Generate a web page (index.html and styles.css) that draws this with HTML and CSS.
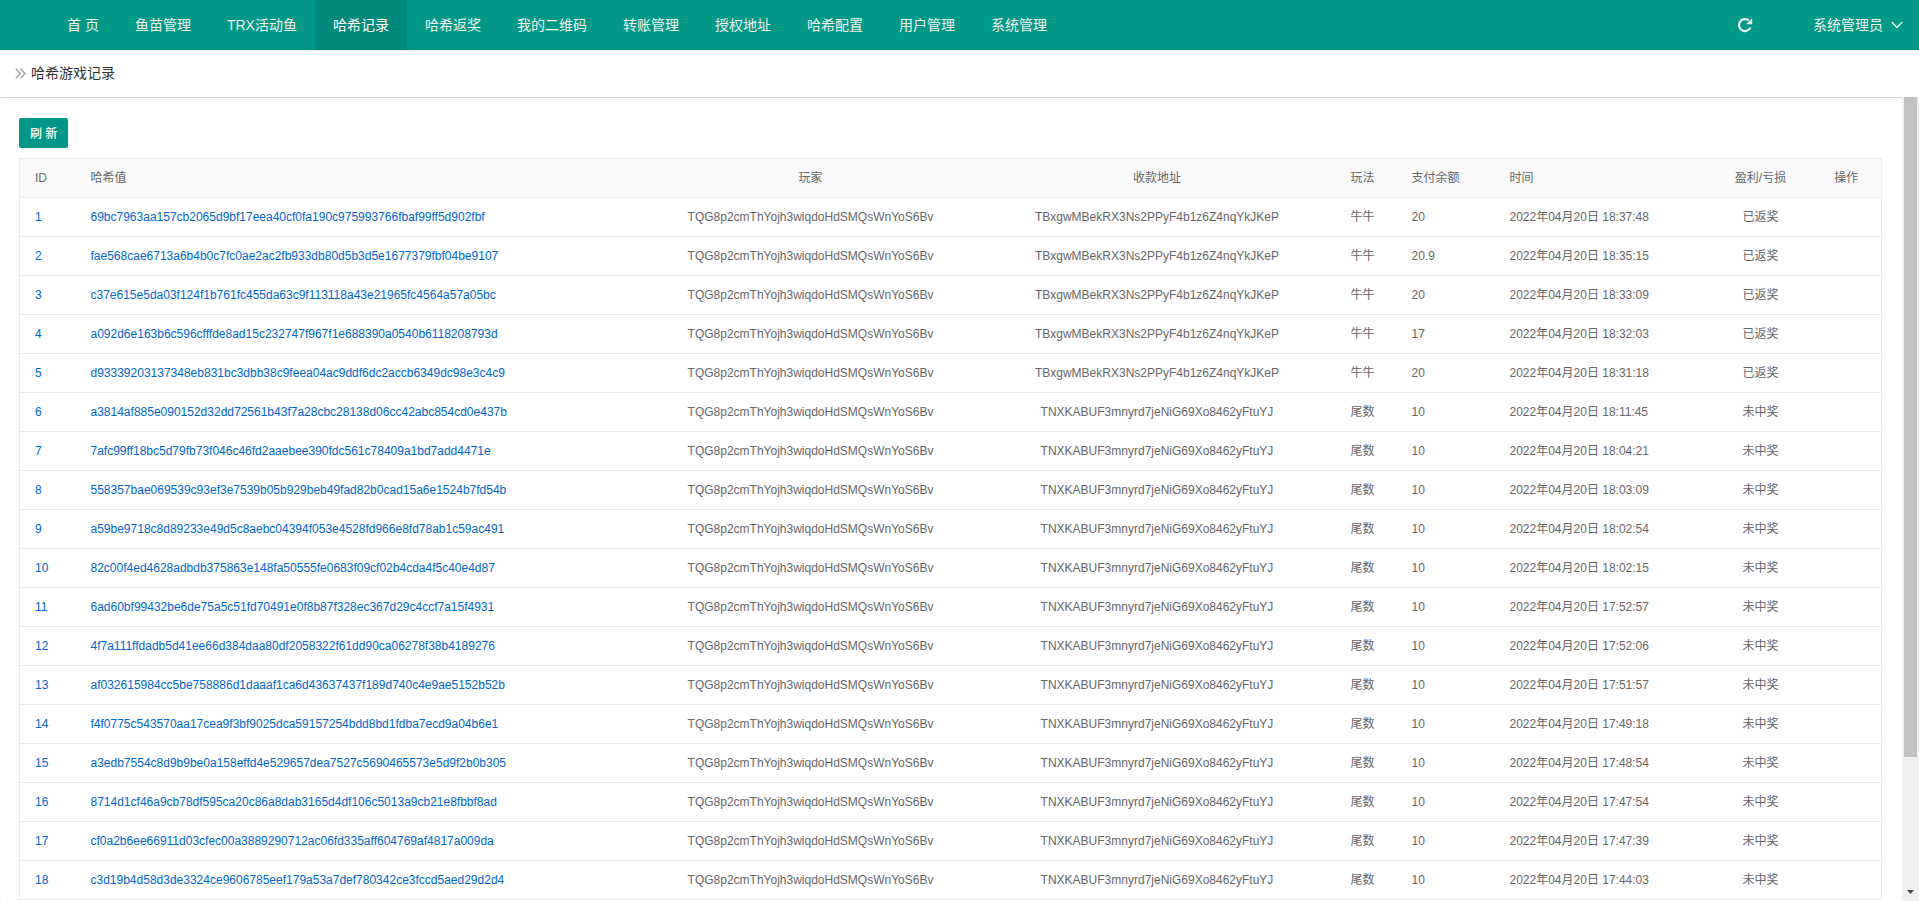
FILE: index.html
```html
<!DOCTYPE html>
<html lang="zh-CN">
<head>
<meta charset="utf-8">
<title>哈希游戏记录</title>
<link rel="stylesheet" href="styles.css">
</head>
<body>
<header class="topbar">
  <nav class="nav">
    <a href="#">首 页</a>
    <a href="#">鱼苗管理</a>
    <a href="#">TRX活动鱼</a>
    <a href="#" class="active">哈希记录</a>
    <a href="#">哈希返奖</a>
    <a href="#">我的二维码</a>
    <a href="#">转账管理</a>
    <a href="#">授权地址</a>
    <a href="#">哈希配置</a>
    <a href="#">用户管理</a>
    <a href="#">系统管理</a>
  </nav>
  <div class="tools">
    <button type="button" class="reload" aria-label="刷新页面">
      <svg width="16" height="16" viewBox="0 0 16 16"><path d="M13.400 10.600A6 6 0 1 1 11.600 3.300" fill="none" stroke="currentColor" stroke-width="2.200"/><path d="M15.200 1v6.200H9z" fill="currentColor"/></svg>
    </button>
    <button type="button" class="user">系统管理员
      <svg width="12" height="8" viewBox="0 0 12 8"><path d="M.8 1 6 6.500 11.200 1" fill="none" stroke="currentColor" stroke-width="1.400"/></svg>
    </button>
  </div>
</header>
<div class="crumb">
  <svg width="11" height="11" viewBox="0 0 11 11"><path d="M.8.6 5.200 5.500.8 10.400M5.600.6 10 5.500 5.600 10.400" fill="none" stroke="currentColor" stroke-width="1.300"/></svg>
  <h1>哈希游戏记录</h1>
</div>
<div class="body">
  <main class="card">
    <button type="button" class="btn">刷 新</button>
    <table class="records">
      <colgroup>
        <col class="w-id"><col><col class="w-player"><col class="w-address"><col class="w-play"><col class="w-pay"><col class="w-time"><col class="w-result"><col class="w-action">
      </colgroup>
      <thead>
        <tr><th>ID</th><th>哈希值</th><th class="mid">玩家</th><th class="mid">收款地址</th><th>玩法</th><th>支付余额</th><th>时间</th><th class="mid">盈利/亏损</th><th class="mid">操作</th></tr>
      </thead>
      <tbody>
        <tr><td><a href="#">1</a></td><td><a href="#">69bc7963aa157cb2065d9bf17eea40cf0fa190c975993766fbaf99ff5d902fbf</a></td><td class="mid">TQG8p2cmThYojh3wiqdoHdSMQsWnYoS6Bv</td><td class="mid">TBxgwMBekRX3Ns2PPyF4b1z6Z4nqYkJKeP</td><td>牛牛</td><td>20</td><td>2022年04月20日 18:37:48</td><td class="mid">已返奖</td><td></td></tr>
        <tr><td><a href="#">2</a></td><td><a href="#">fae568cae6713a6b4b0c7fc0ae2ac2fb933db80d5b3d5e1677379fbf04be9107</a></td><td class="mid">TQG8p2cmThYojh3wiqdoHdSMQsWnYoS6Bv</td><td class="mid">TBxgwMBekRX3Ns2PPyF4b1z6Z4nqYkJKeP</td><td>牛牛</td><td>20.9</td><td>2022年04月20日 18:35:15</td><td class="mid">已返奖</td><td></td></tr>
        <tr><td><a href="#">3</a></td><td><a href="#">c37e615e5da03f124f1b761fc455da63c9f113118a43e21965fc4564a57a05bc</a></td><td class="mid">TQG8p2cmThYojh3wiqdoHdSMQsWnYoS6Bv</td><td class="mid">TBxgwMBekRX3Ns2PPyF4b1z6Z4nqYkJKeP</td><td>牛牛</td><td>20</td><td>2022年04月20日 18:33:09</td><td class="mid">已返奖</td><td></td></tr>
        <tr><td><a href="#">4</a></td><td><a href="#">a092d6e163b6c596cfffde8ad15c232747f967f1e688390a0540b6118208793d</a></td><td class="mid">TQG8p2cmThYojh3wiqdoHdSMQsWnYoS6Bv</td><td class="mid">TBxgwMBekRX3Ns2PPyF4b1z6Z4nqYkJKeP</td><td>牛牛</td><td>17</td><td>2022年04月20日 18:32:03</td><td class="mid">已返奖</td><td></td></tr>
        <tr><td><a href="#">5</a></td><td><a href="#">d93339203137348eb831bc3dbb38c9feea04ac9ddf6dc2accb6349dc98e3c4c9</a></td><td class="mid">TQG8p2cmThYojh3wiqdoHdSMQsWnYoS6Bv</td><td class="mid">TBxgwMBekRX3Ns2PPyF4b1z6Z4nqYkJKeP</td><td>牛牛</td><td>20</td><td>2022年04月20日 18:31:18</td><td class="mid">已返奖</td><td></td></tr>
        <tr><td><a href="#">6</a></td><td><a href="#">a3814af885e090152d32dd72561b43f7a28cbc28138d06cc42abc854cd0e437b</a></td><td class="mid">TQG8p2cmThYojh3wiqdoHdSMQsWnYoS6Bv</td><td class="mid">TNXKABUF3mnyrd7jeNiG69Xo8462yFtuYJ</td><td>尾数</td><td>10</td><td>2022年04月20日 18:11:45</td><td class="mid">未中奖</td><td></td></tr>
        <tr><td><a href="#">7</a></td><td><a href="#">7afc99ff18bc5d79fb73f046c46fd2aaebee390fdc561c78409a1bd7add4471e</a></td><td class="mid">TQG8p2cmThYojh3wiqdoHdSMQsWnYoS6Bv</td><td class="mid">TNXKABUF3mnyrd7jeNiG69Xo8462yFtuYJ</td><td>尾数</td><td>10</td><td>2022年04月20日 18:04:21</td><td class="mid">未中奖</td><td></td></tr>
        <tr><td><a href="#">8</a></td><td><a href="#">558357bae069539c93ef3e7539b05b929beb49fad82b0cad15a6e1524b7fd54b</a></td><td class="mid">TQG8p2cmThYojh3wiqdoHdSMQsWnYoS6Bv</td><td class="mid">TNXKABUF3mnyrd7jeNiG69Xo8462yFtuYJ</td><td>尾数</td><td>10</td><td>2022年04月20日 18:03:09</td><td class="mid">未中奖</td><td></td></tr>
        <tr><td><a href="#">9</a></td><td><a href="#">a59be9718c8d89233e49d5c8aebc04394f053e4528fd966e8fd78ab1c59ac491</a></td><td class="mid">TQG8p2cmThYojh3wiqdoHdSMQsWnYoS6Bv</td><td class="mid">TNXKABUF3mnyrd7jeNiG69Xo8462yFtuYJ</td><td>尾数</td><td>10</td><td>2022年04月20日 18:02:54</td><td class="mid">未中奖</td><td></td></tr>
        <tr><td><a href="#">10</a></td><td><a href="#">82c00f4ed4628adbdb375863e148fa50555fe0683f09cf02b4cda4f5c40e4d87</a></td><td class="mid">TQG8p2cmThYojh3wiqdoHdSMQsWnYoS6Bv</td><td class="mid">TNXKABUF3mnyrd7jeNiG69Xo8462yFtuYJ</td><td>尾数</td><td>10</td><td>2022年04月20日 18:02:15</td><td class="mid">未中奖</td><td></td></tr>
        <tr><td><a href="#">11</a></td><td><a href="#">6ad60bf99432be6de75a5c51fd70491e0f8b87f328ec367d29c4ccf7a15f4931</a></td><td class="mid">TQG8p2cmThYojh3wiqdoHdSMQsWnYoS6Bv</td><td class="mid">TNXKABUF3mnyrd7jeNiG69Xo8462yFtuYJ</td><td>尾数</td><td>10</td><td>2022年04月20日 17:52:57</td><td class="mid">未中奖</td><td></td></tr>
        <tr><td><a href="#">12</a></td><td><a href="#">4f7a111ffdadb5d41ee66d384daa80df2058322f61dd90ca06278f38b4189276</a></td><td class="mid">TQG8p2cmThYojh3wiqdoHdSMQsWnYoS6Bv</td><td class="mid">TNXKABUF3mnyrd7jeNiG69Xo8462yFtuYJ</td><td>尾数</td><td>10</td><td>2022年04月20日 17:52:06</td><td class="mid">未中奖</td><td></td></tr>
        <tr><td><a href="#">13</a></td><td><a href="#">af032615984cc5be758886d1daaaf1ca6d43637437f189d740c4e9ae5152b52b</a></td><td class="mid">TQG8p2cmThYojh3wiqdoHdSMQsWnYoS6Bv</td><td class="mid">TNXKABUF3mnyrd7jeNiG69Xo8462yFtuYJ</td><td>尾数</td><td>10</td><td>2022年04月20日 17:51:57</td><td class="mid">未中奖</td><td></td></tr>
        <tr><td><a href="#">14</a></td><td><a href="#">f4f0775c543570aa17cea9f3bf9025dca59157254bdd8bd1fdba7ecd9a04b6e1</a></td><td class="mid">TQG8p2cmThYojh3wiqdoHdSMQsWnYoS6Bv</td><td class="mid">TNXKABUF3mnyrd7jeNiG69Xo8462yFtuYJ</td><td>尾数</td><td>10</td><td>2022年04月20日 17:49:18</td><td class="mid">未中奖</td><td></td></tr>
        <tr><td><a href="#">15</a></td><td><a href="#">a3edb7554c8d9b9be0a158effd4e529657dea7527c5690465573e5d9f2b0b305</a></td><td class="mid">TQG8p2cmThYojh3wiqdoHdSMQsWnYoS6Bv</td><td class="mid">TNXKABUF3mnyrd7jeNiG69Xo8462yFtuYJ</td><td>尾数</td><td>10</td><td>2022年04月20日 17:48:54</td><td class="mid">未中奖</td><td></td></tr>
        <tr><td><a href="#">16</a></td><td><a href="#">8714d1cf46a9cb78df595ca20c86a8dab3165d4df106c5013a9cb21e8fbbf8ad</a></td><td class="mid">TQG8p2cmThYojh3wiqdoHdSMQsWnYoS6Bv</td><td class="mid">TNXKABUF3mnyrd7jeNiG69Xo8462yFtuYJ</td><td>尾数</td><td>10</td><td>2022年04月20日 17:47:54</td><td class="mid">未中奖</td><td></td></tr>
        <tr><td><a href="#">17</a></td><td><a href="#">cf0a2b6ee66911d03cfec00a3889290712ac06fd335aff604769af4817a009da</a></td><td class="mid">TQG8p2cmThYojh3wiqdoHdSMQsWnYoS6Bv</td><td class="mid">TNXKABUF3mnyrd7jeNiG69Xo8462yFtuYJ</td><td>尾数</td><td>10</td><td>2022年04月20日 17:47:39</td><td class="mid">未中奖</td><td></td></tr>
        <tr><td><a href="#">18</a></td><td><a href="#">c3d19b4d58d3de3324ce9606785eef179a53a7def780342ce3fccd5aed29d2d4</a></td><td class="mid">TQG8p2cmThYojh3wiqdoHdSMQsWnYoS6Bv</td><td class="mid">TNXKABUF3mnyrd7jeNiG69Xo8462yFtuYJ</td><td>尾数</td><td>10</td><td>2022年04月20日 17:44:03</td><td class="mid">未中奖</td><td></td></tr>
      </tbody>
    </table>
  </main>
  <div class="scroll" aria-hidden="true">
    <div class="thumb"></div>
    <svg width="7" height="4" viewBox="0 0 7 4"><path d="M0 0h7L3.500 4z" fill="#505050"/></svg>
  </div>
</div>
</body>
</html>
```
FILE: styles.css
```css
* { box-sizing: border-box; }

body {
  margin: 0;
  height: 100vh;
  display: flex;
  flex-direction: column;
  overflow: hidden;
  background: #fff;
  color: #333;
  font: 14px/24px "Liberation Sans", "Noto Sans CJK SC", sans-serif;
}

a { text-decoration: none; }
button { font: inherit; border: 0; background: none; cursor: pointer; }
svg { display: block; flex: none; }

.topbar {
  flex: none;
  display: flex;
  justify-content: space-between;
  height: 50px;
  background: #009987;
}

.nav { display: flex; padding-left: 49px; }
.nav a {
  padding: 0 18px;
  line-height: 50px;
  color: #f0f0f0;
  white-space: nowrap;
}
.nav a.active { background: #008a7a; color: #fff; }

.tools { display: flex; align-items: center; gap: 60px; padding-right: 16px; }
.tools button {
  display: flex;
  align-items: center;
  gap: 8px;
  height: 50px;
  padding: 0;
  color: #f0f0f0;
}

.crumb {
  flex: none;
  display: flex;
  align-items: center;
  gap: 5px;
  height: 47px;
  padding: 0 15px 2px;
  border-top: 1px solid #e6e6e6;
  color: #999;
}
.crumb h1 { margin: 0; font-size: 14px; font-weight: 400; color: #333; }

.body { flex: 1; min-height: 0; display: flex; background: #f0f0f0; }

.card {
  flex: 1;
  min-width: 0;
  overflow: hidden;
  padding: 20px 20px 0 19px;
  background: #fff;
  border-top: 1px solid #d2d2d2;
  border-radius: 2px;
}

.btn {
  display: block;
  height: 30px;
  margin-bottom: 10px;
  padding: 1px 11px 0;
  border-radius: 2px;
  background: #009688;
  color: #fff;
  font-size: 12px;
  font-weight: 500;
}

.records {
  width: 100%;
  table-layout: fixed;
  border-collapse: collapse;
  border: 1px solid #ebebeb;
  font-size: 12px;
  line-height: 18px;
  color: #666;
}
.records th, .records td {
  height: 39px;
  padding: 0 15px;
  border-bottom: 1px solid #ebebeb;
  text-align: left;
  font-weight: 400;
  white-space: nowrap;
}
.records thead { background: #fafafa; }
.records a { color: #0066cc; }
.records .mid { text-align: center; }

.w-id { width: 56px; }
.w-player { width: 336px; }
.w-address { width: 357px; }
.w-play { width: 61px; }
.w-pay { width: 98px; }
.w-time { width: 215px; }
.w-result { width: 102px; }
.w-action { width: 70px; }

.scroll {
  flex: none;
  width: 17px;
  display: flex;
  flex-direction: column;
  align-items: center;
  justify-content: space-between;
  padding-bottom: 7px;
}
.thumb { width: 13px; height: 660px; max-height: 83%; background: #c1c1c1; }
```
